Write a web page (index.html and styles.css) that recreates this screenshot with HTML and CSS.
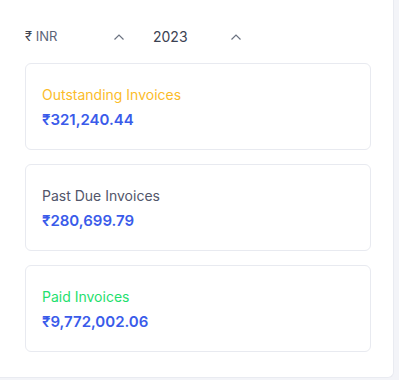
FILE: index.html
```html
<html>
<head>
<link rel="stylesheet" href="styles.css">
</head>
<body>
<div class="panel">
    <!-- currency and year pickers -->
    <div class="filters">
        <div class="picker currency">
            <span class="value"><span class="sym">₹</span> INR</span>
            <svg class="chev" width="12" height="8" viewBox="0 0 12 8"><path d="M1.5 6.5 L6 2 L10.5 6.5" fill="none" stroke="#6b7280" stroke-width="1.2"/></svg>
        </div>
        <div class="picker year">
            <span class="value">2023</span>
            <svg class="chev" width="12" height="8" viewBox="0 0 12 8"><path d="M1.5 6.5 L6 2 L10.5 6.5" fill="none" stroke="#6b7280" stroke-width="1.2"/></svg>
        </div>
    </div>

    <div class="cards">
        <div class="card">
            <div class="label outstanding">Outstanding Invoices</div>
            <div class="amount">₹321,240.44</div>
        </div>
        <div class="card">
            <div class="label due">Past Due Invoices</div>
            <div class="amount">₹280,699.79</div>
        </div>
        <div class="card">
            <div class="label paid">Paid Invoices</div>
            <div class="amount">₹9,772,002.06</div>
        </div>
    </div>
</div>
</body>
</html>
```

FILE: styles.css
```css
* {
    margin: 0;
    padding: 0;
    box-sizing: border-box;
}

body {
    background: #f3f4f8;
    font-family: Inter, "Noto Sans", sans-serif;
    width: 399px;
    height: 380px;
    overflow: hidden;
}

.panel {
    width: 394px;
    height: 378px;
    background: #ffffff;
    border-radius: 0 0 6px 0;
    border-right: 1px solid #e9ebf1;
    border-bottom: 1px solid #e9ebf1;
    padding: 26px 22px 0 25px;
}

.filters {
    display: flex;
    align-items: center;
    height: 20px;
}

.picker {
    display: flex;
    align-items: center;
    justify-content: space-between;
}

.picker.currency {
    width: 100px;
    margin-right: 28px;
}

.picker.year {
    width: 89px;
}

.picker .value {
    font-size: 13px;
    color: #5b6478;
}

.picker .sym {
    color: #3f4350;
}

.picker.year .value {
    font-size: 14px;
    color: #3b4252;
}

.chev {
    display: block;
    margin-top: 1px;
}

.cards {
    display: flex;
    flex-direction: column;
    gap: 14px;
    margin-top: 17px;
}

.card {
    height: 87px;
    border: 1px solid #e8eaf0;
    border-radius: 6px;
    padding: 21px 16px 0 16px;
}

.label {
    font-size: 14px;
    line-height: 20px;
    color: #52566a;
}

.label.outstanding {
    color: #fbbc2a;
}

.label.paid {
    color: #1fe06e;
}

.amount {
    margin-top: 4px;
    font-size: 15px;
    line-height: 22px;
    font-weight: 600;
    color: #3a5bea;
}
```
